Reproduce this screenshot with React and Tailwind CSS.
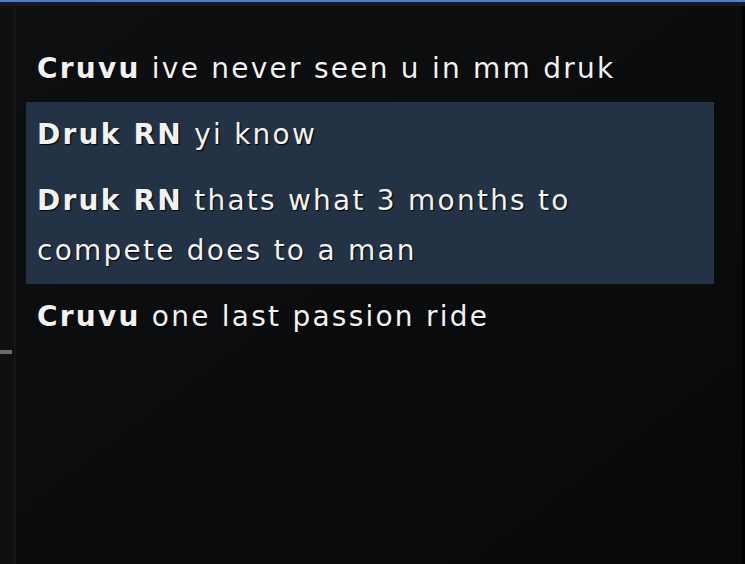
import React from "react";

const MESSAGES = [
  { name: "Cruvu", text: "ive never seen u in mm druk" },
  { name: "Druk RN", text: "yi know", hl: true },
  { name: "Druk RN", text: "thats what 3 months to compete does to a man", hl: true },
  { name: "Cruvu", text: "one last passion ride" },
];

const Msg = ({ name, text }) => (
  <p className="px-[11px] py-2 leading-[50px]">
    <span className="font-bold">{name}</span> {text}
  </p>
);

const App = () => {
  // group consecutive highlighted messages into one block
  const blocks = [];
  MESSAGES.forEach((m) => {
    const last = blocks[blocks.length - 1];
    if (last && last.hl === !!m.hl) last.items.push(m);
    else blocks.push({ hl: !!m.hl, items: [m] });
  });

  return (
    <div className="w-[745px] h-[564px] flex flex-col overflow-hidden bg-[#0b0c0d] font-['DejaVu_Sans',sans-serif]">
      {/* TOP BAR */}
      <div className="h-[2px] bg-[#4a7ed2] shrink-0" />
      <div className="h-[4px] bg-[#18191c] shrink-0" />

      <div className="flex flex-1 min-h-0 bg-gradient-to-br from-[#0e0f11] via-[#0b0c0d] to-[#090909]">
        {/* SIDE RAIL */}
        <div className="w-[14px] shrink-0 flex flex-col bg-[#0f1012]">
          <div className="h-[344px]" />
          <div className="h-[4px] w-[12px] bg-[#6a6a6a]" />
        </div>
        <div className="w-[2px] shrink-0 bg-[#161719]" />

        {/* CHAT */}
        <div className="flex-1 pl-[10px] pr-[28px] pt-[30px] text-[28px] tracking-[0.08em] text-[#f2f2f2] [text-shadow:1px_1px_1px_#000]">
          {blocks.map((b, i) => (
            <div key={i} className={b.hl ? "bg-[#233244]" : ""}>
              {b.items.map((m, j) => (
                <Msg key={j} {...m} />
              ))}
            </div>
          ))}
        </div>
        <div className="w-[3px] shrink-0 bg-black" />
      </div>
    </div>
  );
};

export default App;
